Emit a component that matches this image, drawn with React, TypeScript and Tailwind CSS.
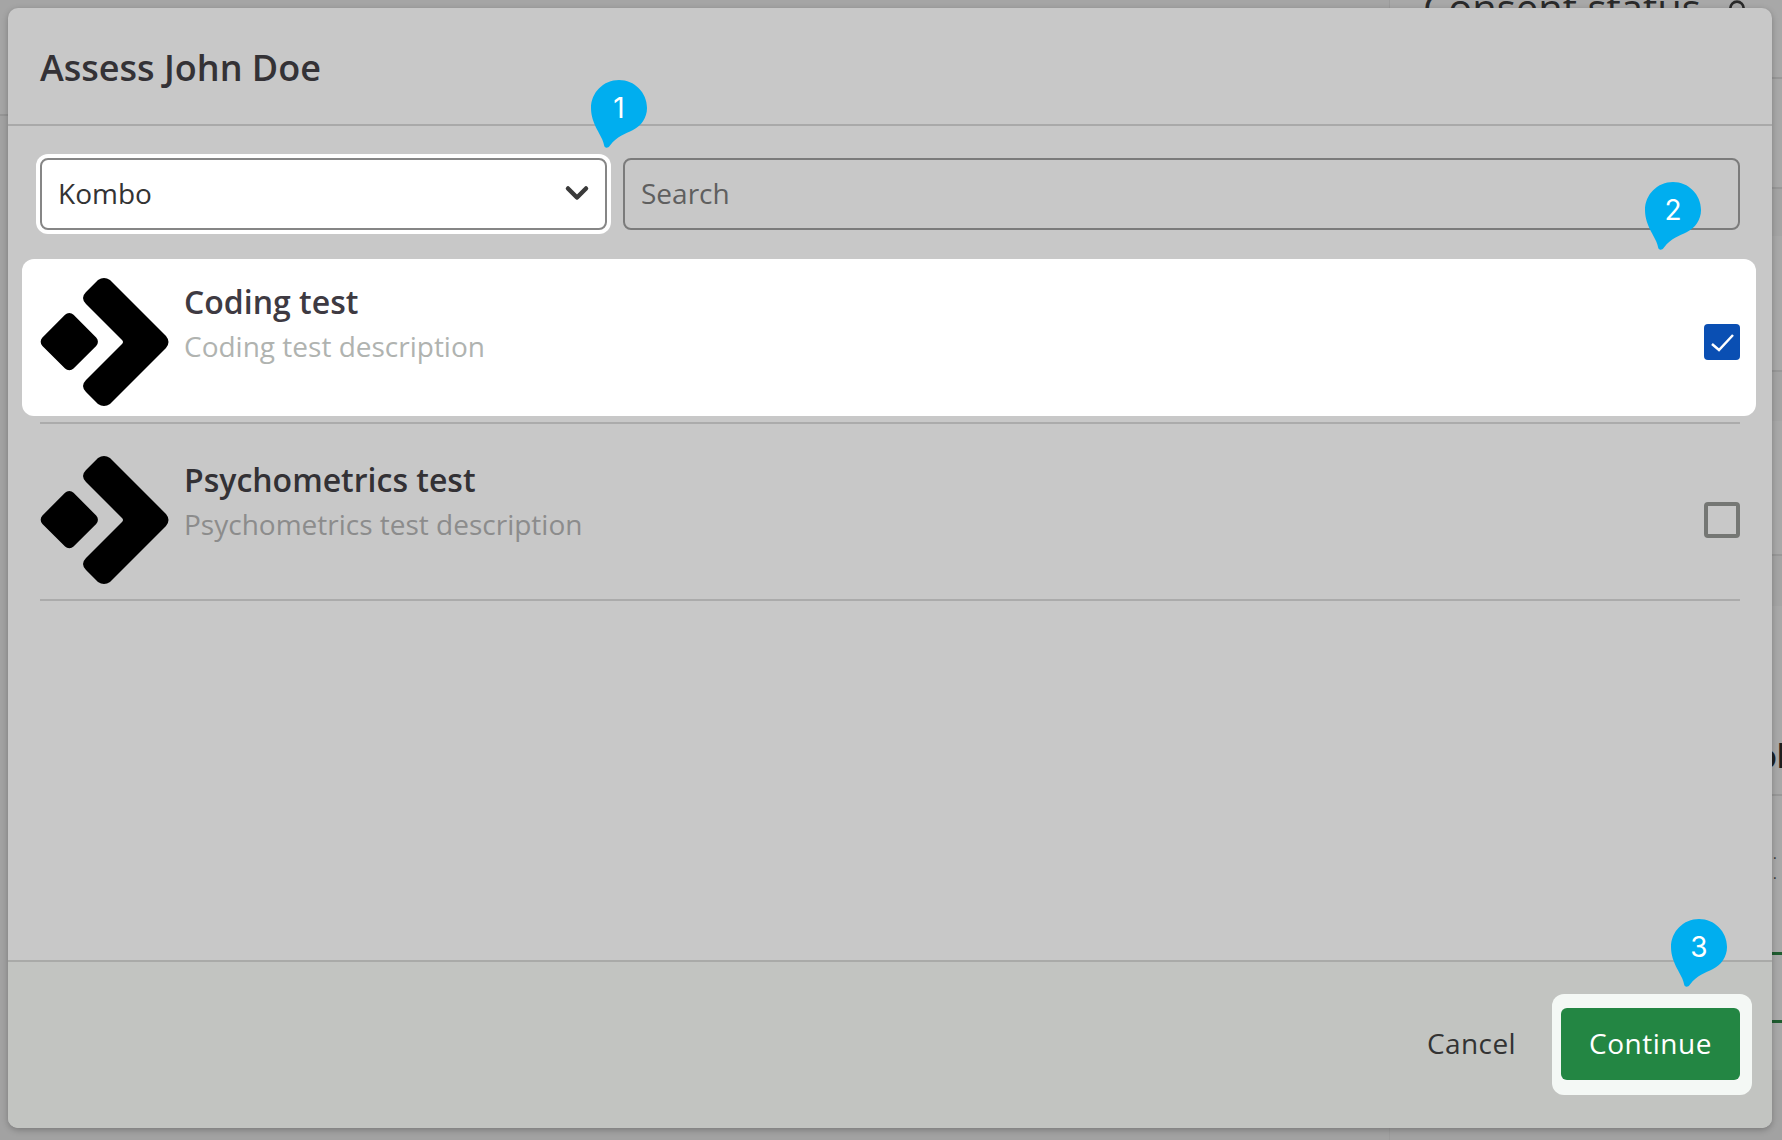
import { ChevronDown, Lock } from 'lucide-react';

function Bubble({ n, className }: { n: number; className: string }) {
  return (
    <div className={`absolute z-20 h-[68px] w-[56px] ${className}`}>
      <svg width="56" height="68" viewBox="0 0 56 68" className="block">
        <path
          d="M28 0C43.5 0 56 12.5 56 28C56 38 50 46 42 50C34 54 26 56 19 65.5C17 68.5 13.5 68.5 13 65C11.5 55 0 45 0 28C0 12.5 12.5 0 28 0Z"
          fill="#00aeef"
        />
      </svg>
      <span className="absolute left-0 top-[8px] w-full text-center font-['Inter',sans-serif] text-[28px] leading-[40px] text-white">
        {n}
      </span>
    </div>
  );
}

function Logo() {
  return (
    <svg width="128" height="128" viewBox="0 0 128 128" className="block shrink-0 overflow-visible">
      <rect x="7.3" y="41.7" width="44" height="44" rx="6" transform="rotate(45 29.3 63.7)" fill="#000" />
      <path
        d="M58 2Q64 -2 70 2L126 58Q131 64 126 70L70 126Q64 130 58 126L46 114Q40 108 46 102L82 66Q84 64 82 62L46 26Q40 20 46 14Z"
        fill="#000"
      />
    </svg>
  );
}

function BackgroundPage() {
  return (
    <div className="flex h-[1140px] w-[1782px] overflow-hidden bg-[#a8a8a8] font-['Open_Sans',sans-serif]">
      <div className="w-[1389px] shrink-0 bg-[#a2a2a2]">
        <div className="h-[116px] border-b-2 border-[#959595] bg-[#a5a5a5]" />
      </div>
      <div className="w-[393px] border-l border-[#9c9c9c]">
        <div className="flex h-[79px] items-start gap-5 border-b-2 border-[#989898] pl-[33px]">
          <div className="mt-[-17px] whitespace-nowrap text-[40px] leading-[50px] text-[#2a2a2a]">
            Consent status
          </div>
          <Lock size={32} strokeWidth={2} className="mt-[-1px] shrink-0 text-[#2a2a2a]" />
        </div>
        <div className="h-[110px] border-b-2 border-[#989898]" />
        <div className="h-[47px] bg-[#a4a4a4]" />
        <div className="h-[136px] border-b-2 border-[#989898]" />
        <div className="h-[49px] bg-[#a4a4a4]" />
        <div className="h-[135px] border-b-2 border-[#989898]" />
        <div className="h-[50px] bg-[#a4a4a4]" />
        <div className="h-[190px] overflow-hidden border-b-2 border-[#989898] pl-[367px]">
          <div className="mt-[130px] text-[32px] font-bold leading-[40px] text-[#1f1f1f]">ol</div>
        </div>
        <div className="flex h-[64px] items-start pl-[383px] text-[#333]">
          <div className="mt-[48px] text-[14px] leading-[20px]">. .</div>
        </div>
        <div className="mt-[92px] h-[3px] bg-[#1f5d30]" />
        <div className="mt-[65px] h-[3px] bg-[#1f5d30]" />
        <div className="mt-[47px] h-[70px] bg-[#a2a2a2]" />
      </div>
    </div>
  );
}

export default function App() {
  return (
    <div className="relative h-[1140px] w-[1782px] overflow-hidden font-['Open_Sans',sans-serif]">
      <BackgroundPage />

      {/* Modal */}
      <div className="absolute left-2 top-2 z-10 flex h-[1120px] w-[1764px] flex-col rounded-[10px] bg-[#c8c8c8] shadow-[0_2px_6px_rgba(0,0,0,0.25)]">
        <div className="flex h-[118px] shrink-0 items-center border-b-2 border-[#a9a9a9] px-8 pt-1">
          <h2 className="text-[36px] font-semibold leading-[44px] text-[#343236]">Assess John Doe</h2>
        </div>

        {/* Filters */}
        <div className="flex gap-4 px-8 pt-8">
          <div className="flex h-[72px] w-[567px] items-center justify-between rounded-[8px] border-2 border-[#868686] bg-white pb-[2px] pl-4 pr-[10px] text-[28px] text-[#333] shadow-[0_0_0_4px_#fff]">
            <span>Kombo</span>
            <ChevronDown size={36} strokeWidth={3} className="text-[#3a3a3a]" />
          </div>
          <div className="flex h-[72px] flex-1 items-center rounded-[8px] border-2 border-[#7b7b7b] px-4 pb-[2px] text-[28px] text-[#5f5f5f]">
            Search
          </div>
        </div>

        {/* List */}
        <div className="flex-1 px-8 pt-4">
          <div className="relative flex items-center border-b-2 border-[#ababab] pb-4 pt-8">
            <div className="absolute bottom-[6px] left-[-18px] right-[-16px] top-[13px] rounded-[12px] bg-white" />
            <div className="relative flex flex-1 items-center gap-4">
              <Logo />
              <div className="mt-[2px] flex-1 self-start">
                <div className="text-[32px] font-semibold leading-[44px] text-[#3e3a42]">Coding test</div>
                <div className="text-[28px] leading-[44px] text-[#b0b3b0]">Coding test description</div>
              </div>
              <div className="flex h-9 w-9 items-center justify-center rounded-[4px] bg-[#0a4fb3]">
                <svg width="36" height="36" viewBox="0 0 36 36" fill="none">
                  <path d="M8 20L15 26L29 11" stroke="#fff" strokeWidth="2.5" />
                </svg>
              </div>
            </div>
          </div>
          <div className="flex items-center gap-4 border-b-2 border-[#ababab] pb-[15px] pt-8">
            <Logo />
            <div className="mt-[2px] flex-1 self-start">
              <div className="text-[32px] font-semibold leading-[44px] text-[#333135]">Psychometrics test</div>
              <div className="text-[28px] leading-[44px] text-[#8c8c8c]">Psychometrics test description</div>
            </div>
            <div className="h-9 w-9 rounded-[4px] border-4 border-[#757774]" />
          </div>
        </div>

        {/* Footer */}
        <div className="flex h-[168px] shrink-0 items-start justify-end gap-[45px] rounded-b-[10px] border-t-2 border-[#a9aaa8] bg-[#c2c4c1] pr-8 pt-[46px]">
          <span className="text-[28px] font-medium leading-[70px] tracking-[0.4px] text-[#333]">Cancel</span>
          <div className="relative h-[72px] w-[179px]">
            <div className="absolute bottom-[-15px] left-[-9px] right-[-12px] top-[-14px] rounded-[12px] bg-[#f4f8f5]" />
            <button className="relative h-full w-full rounded-[6px] bg-[#238643] pb-[2px] text-[28px] font-medium tracking-[0.5px] text-white">
              Continue
            </button>
          </div>
        </div>
      </div>

      <Bubble n={1} className="left-[591px] top-[80px]" />
      <Bubble n={2} className="left-[1645px] top-[182px]" />
      <Bubble n={3} className="left-[1671px] top-[919px]" />
    </div>
  );
}
